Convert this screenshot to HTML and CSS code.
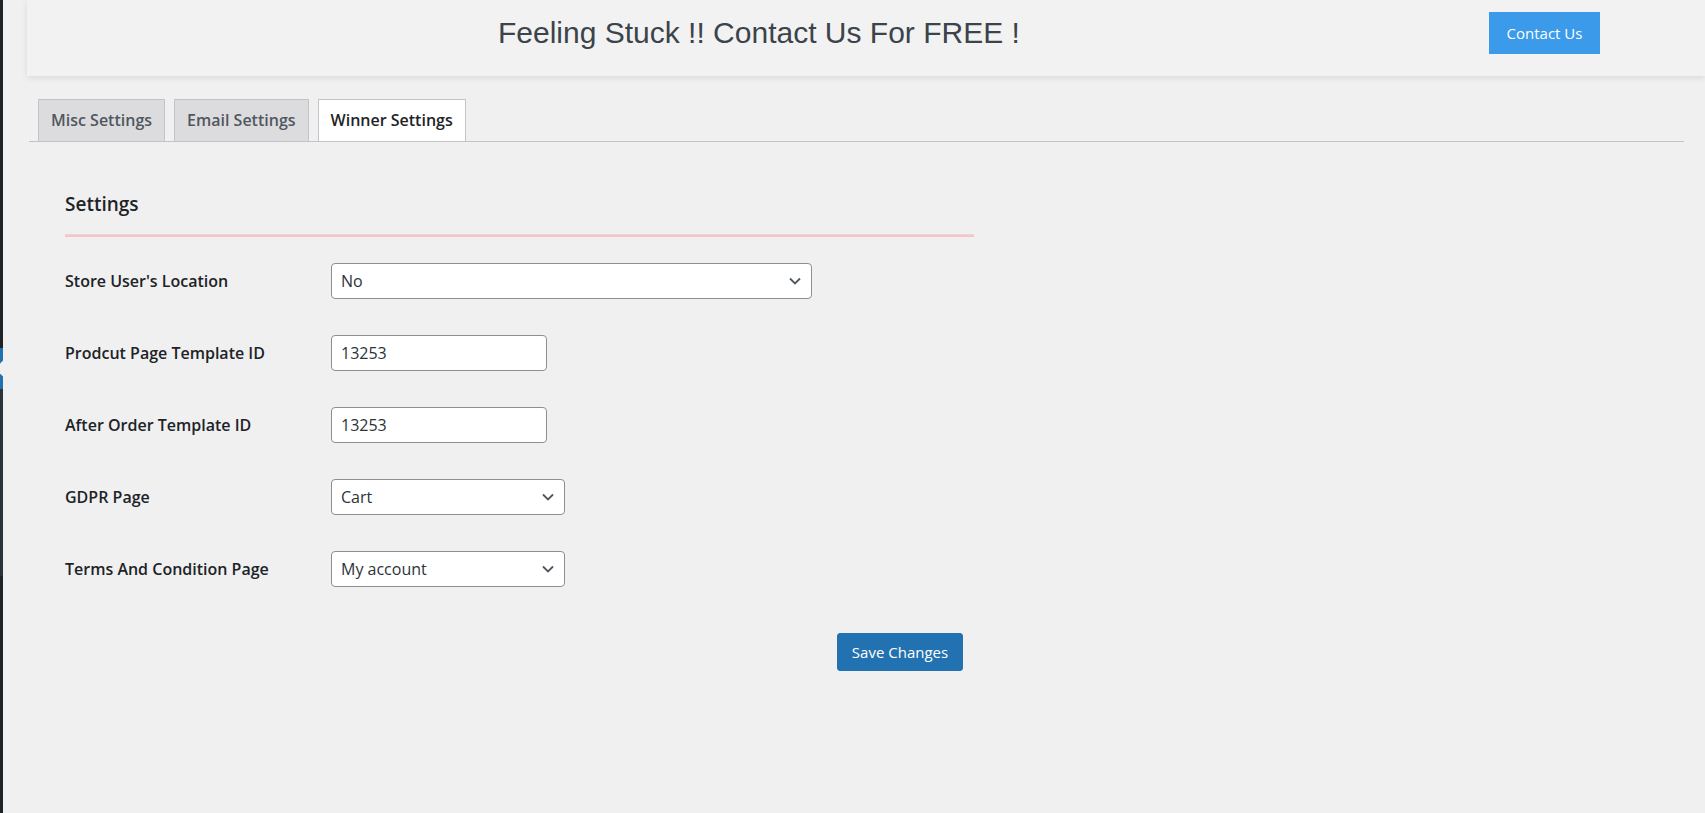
FILE: index.html
```html
<!DOCTYPE html>
<html lang="en">
<head>
  <meta charset="UTF-8">
  <meta name="viewport" content="width=device-width, initial-scale=1.0">
  <title>Winner Settings</title>
  <link rel="stylesheet" href="styles.css">
</head>
<body>
  <div class="menu-edge">
    <div class="edge-top"></div>
    <svg class="edge-current" width="3" height="41" viewBox="0 0 3 41">
      <rect width="3" height="41" fill="#2271b1"/>
      <polygon points="3,12.5 -5,20.5 3,28.5" fill="#f0f0f1"/>
    </svg>
    <div class="edge-sub"></div>
    <div class="edge-bottom"></div>
  </div>

  <div class="wrap">
    <div class="promo">
      <h1 class="promo-text">Feeling Stuck !! Contact Us For FREE !</h1>
      <a class="promo-button" href="#">Contact Us</a>
    </div>

    <nav class="tabs">
      <a class="tab" href="#">Misc Settings</a>
      <a class="tab" href="#">Email Settings</a>
      <a class="tab active" href="#">Winner Settings</a>
    </nav>

    <form class="settings">
      <h2>Settings</h2>
      <hr class="divider">

      <div class="row">
        <label class="row-label">Store User's Location</label>
        <div class="select-wrap wide">
          <select class="field">
            <option>No</option>
            <option>Yes</option>
          </select>
          <svg class="chevron" viewBox="0 0 12 8"><path d="M1 1.5l5 5 5-5" fill="none" stroke="currentColor" stroke-width="1.8"/></svg>
        </div>
      </div>

      <div class="row">
        <label class="row-label">Prodcut Page Template ID</label>
        <input class="field short" type="text" value="13253">
      </div>

      <div class="row">
        <label class="row-label">After Order Template ID</label>
        <input class="field short" type="text" value="13253">
      </div>

      <div class="row">
        <label class="row-label">GDPR Page</label>
        <div class="select-wrap medium">
          <select class="field">
            <option>Cart</option>
          </select>
          <svg class="chevron" viewBox="0 0 12 8"><path d="M1 1.5l5 5 5-5" fill="none" stroke="currentColor" stroke-width="1.8"/></svg>
        </div>
      </div>

      <div class="row">
        <label class="row-label">Terms And Condition Page</label>
        <div class="select-wrap medium">
          <select class="field">
            <option>My account</option>
          </select>
          <svg class="chevron" viewBox="0 0 12 8"><path d="M1 1.5l5 5 5-5" fill="none" stroke="currentColor" stroke-width="1.8"/></svg>
        </div>
      </div>

      <div class="actions">
        <button class="save" type="button">Save Changes</button>
      </div>
    </form>
  </div>
</body>
</html>
```

FILE: styles.css
```css
* {
  margin: 0;
  padding: 0;
  box-sizing: border-box;
}

body {
  font-family: 'Open Sans', 'Noto Sans', sans-serif;
  background: #f0f0f1;
  color: #1d2327;
  display: flex;
  min-height: 100vh;
  overflow: hidden;
}

/* sliver of the admin menu on the left */
.menu-edge {
  width: 3px;
  display: flex;
  flex-direction: column;
  flex-shrink: 0;
}

.edge-top {
  height: 348px;
  background: #1d2327;
}

.edge-current {
  display: block;
}

.edge-sub {
  height: 187px;
  background: #2c3338;
}

.edge-bottom {
  flex: 1;
  background: #1d2327;
}

.wrap {
  flex: 1;
  padding-left: 24px;
}

/* promo banner */
.promo {
  height: 76px;
  background: #f2f2f2;
  box-shadow: 0 2px 6px rgba(0, 0, 0, 0.09);
  display: flex;
  align-items: center;
  padding: 0 105px 10px 471px;
}

.promo-text {
  font-family: 'Liberation Sans', Arial, sans-serif;
  font-size: 30px;
  font-weight: 400;
  line-height: 34px;
  color: #3c434a;
}

.promo-button {
  margin-left: auto;
  width: 111px;
  height: 42px;
  display: flex;
  align-items: center;
  justify-content: center;
  background: #3b9ae9;
  color: #fff;
  font-size: 15px;
  text-decoration: none;
}

/* tabs */
.tabs {
  display: flex;
  gap: 9px;
  margin: 23px 21px 0 2px;
  padding-left: 9px;
  border-bottom: 1px solid #c3c4c7;
}

.tab {
  padding: 8px 12px 9px;
  border: 1px solid #c3c4c7;
  border-bottom: none;
  background: #dcdcde;
  color: #50575e;
  font-size: 16px;
  font-weight: 600;
  line-height: 24px;
  text-decoration: none;
}

.tab.active {
  background: #fff;
  color: #1d2327;
}

/* settings form */
.settings {
  margin-left: 38px;
}

.settings h2 {
  margin-top: 50px;
  font-size: 19px;
  font-weight: 600;
  line-height: 24px;
  color: #1d2327;
}

.divider {
  width: 909px;
  margin-top: 18px;
  border: none;
  border-top: 1px solid #dcdcde;
  border-bottom: 2px solid #ffc0cb;
}

.row {
  height: 72px;
  display: flex;
  align-items: center;
}

.divider + .row {
  margin-top: 8px;
}

.row-label {
  width: 266px;
  font-size: 16px;
  font-weight: 600;
  color: #1d2327;
}

.field {
  height: 36px;
  border: 1px solid #8c8f94;
  border-radius: 4px;
  background: #fff;
  color: #2c3338;
  font-family: inherit;
  font-size: 16px;
  padding: 0 9px;
  outline: none;
}

.field.short {
  width: 216px;
}

.select-wrap {
  position: relative;
}

.select-wrap .field {
  width: 100%;
  appearance: none;
  -webkit-appearance: none;
  padding-right: 28px;
}

.select-wrap.wide {
  width: 481px;
}

.select-wrap.medium {
  width: 234px;
}

.chevron {
  position: absolute;
  right: 11px;
  top: 14px;
  width: 12px;
  height: 8px;
  color: #50575e;
  pointer-events: none;
}

.actions {
  margin-top: 28px;
  padding-left: 772px;
}

.save {
  width: 126px;
  height: 38px;
  background: #2271b1;
  border: 1px solid #2271b1;
  border-radius: 3px;
  color: #fff;
  font-family: inherit;
  font-size: 15px;
  cursor: pointer;
}
```
